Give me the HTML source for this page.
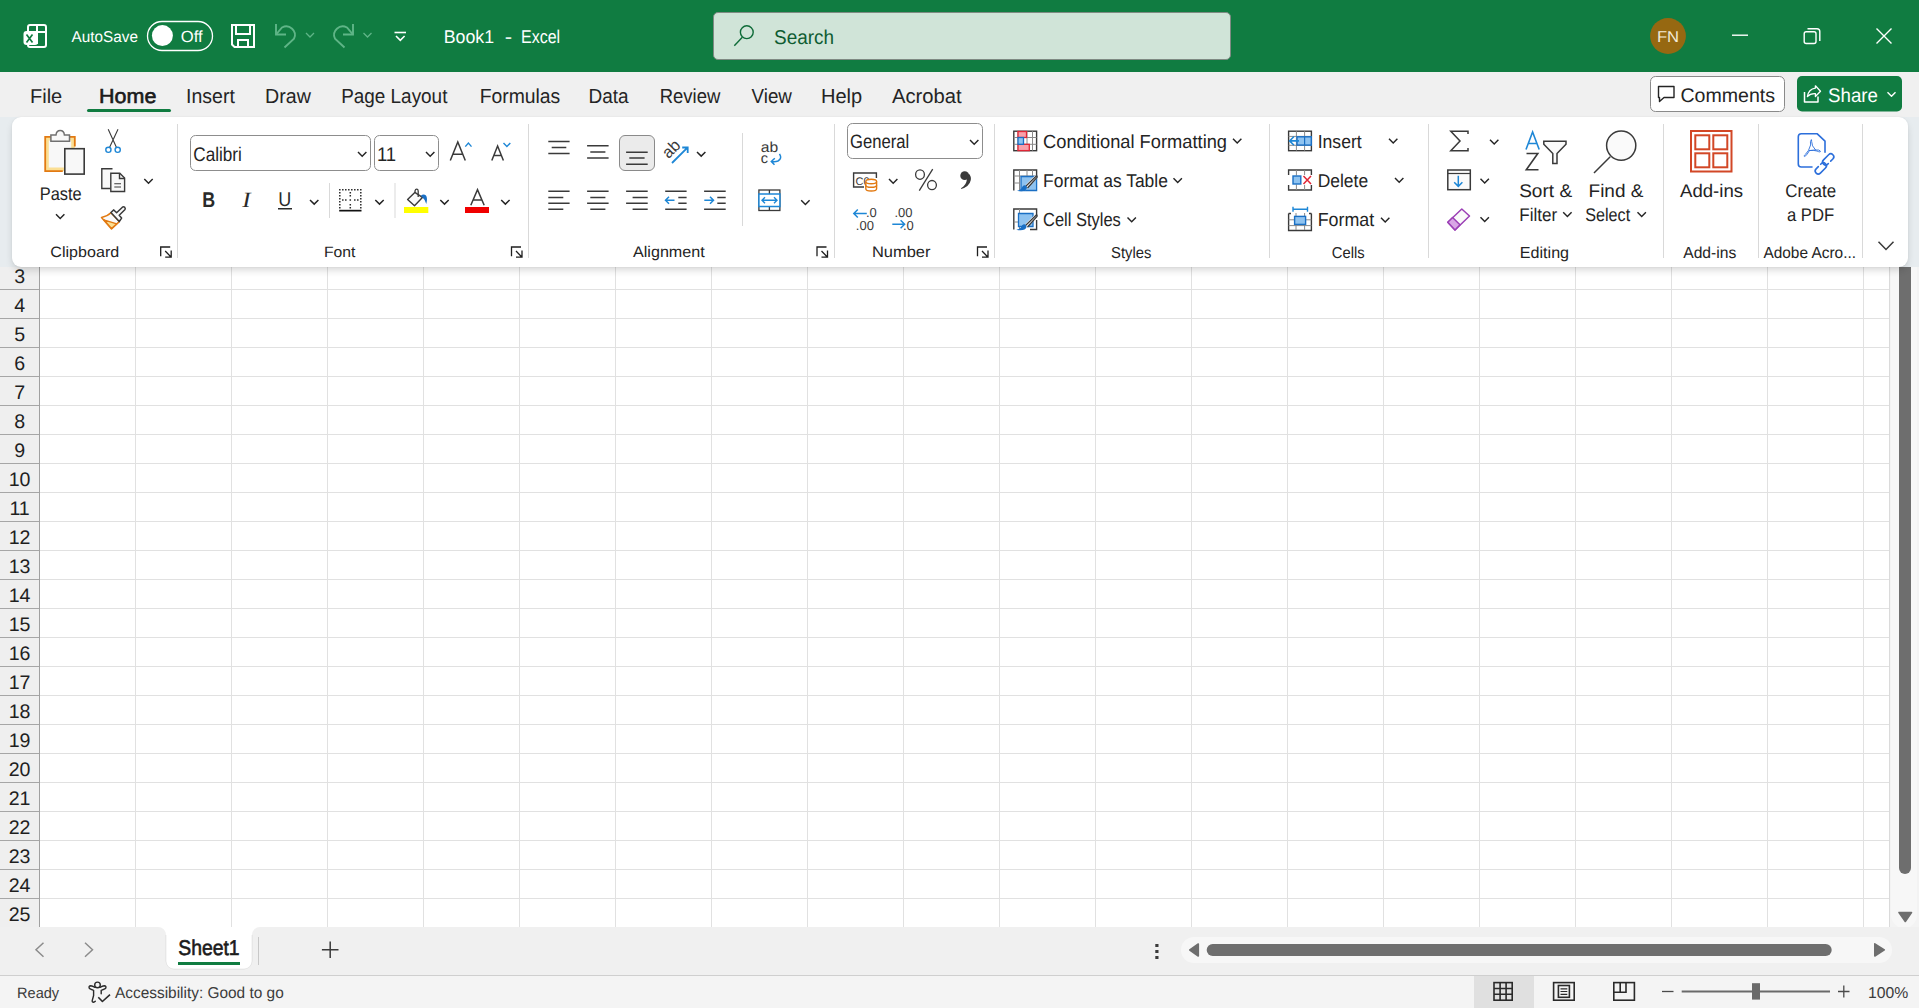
<!DOCTYPE html>
<html><head><meta charset="utf-8">
<style>
*{box-sizing:border-box;margin:0;padding:0}
html,body{width:1919px;height:1008px;overflow:hidden;background:#fff;font-family:"Liberation Sans",sans-serif;color:#242424}
.a{position:absolute}
.t{position:absolute;white-space:nowrap;line-height:1;transform-origin:0 0}
svg{position:absolute;overflow:visible}
#title{left:0;top:0;width:1919px;height:72px;background:#107c41}
#tabs{left:0;top:72px;width:1919px;height:45px;background:#f0f0f0}
#band{left:0;top:117px;width:1919px;height:150px;background:#e7ecef}
#ribbon{left:12px;top:117px;width:1896px;height:150px;background:#fff;border-radius:9px;box-shadow:0 4px 8px -2px rgba(0,0,0,.2),0 0 2px rgba(0,0,0,.06)}
#grid{left:40px;top:261px;width:1849px;height:667px;background-color:#fff;
 background-image:linear-gradient(90deg,transparent 95px,#e1e1e1 95px,#e1e1e1 96px,transparent 96px),linear-gradient(180deg,transparent 28px,#e1e1e1 28px,#e1e1e1 29px,transparent 29px);
 background-size:96px 29px,96px 29px;background-position:0 0,0 0}
#rowhdr{left:0;top:261px;width:40px;height:666px;background-color:#efefef;border-right:1px solid #a0a0a0;
 background-image:linear-gradient(180deg,transparent 28px,#a6a6a6 28px,#a6a6a6 29px,transparent 29px);background-size:40px 29px}
#vscroll{left:1889px;top:260px;width:30px;height:667px;background:#f3f3f3}
#sheetbar{left:0;top:927px;width:1919px;height:48px;background:#fff}
#status{left:0;top:975px;width:1919px;height:33px;background:#f4f4f4;border-top:1px solid #cfcfcf}
.sep{position:absolute;width:1px;background:#dadada}
text{font-family:"Liberation Sans",sans-serif;white-space:pre;text-rendering:geometricPrecision}

</style></head><body>
<div id="title" class="a"></div>
<div id="tabs" class="a"></div>
<div id="grid" class="a"></div>
<div id="rowhdr" class="a"></div>
<div id="vscroll" class="a"></div>
<div id="sheetbar" class="a"></div>
<div id="status" class="a"></div>
<!-- ===== BOTTOM ===== -->
<svg style="left:0;top:260px" width="1919" height="748" viewBox="0 260 1919 748">
 <!-- vertical scrollbar -->
 <rect x="1889" y="267" width="1" height="660" fill="#dadada"/>
 <path d="M1891 267 H1917 V915 A13 13 0 0 1 1891 915 Z" fill="#f7f7f7"/>
 <path d="M1899 267 H1911 V868 A6 6 0 0 1 1899 868 Z" fill="#6e6e6e"/>
 <path d="M1899 912.5 H1911.5 L1905.3 921.5 Z" fill="#6e6e6e" stroke="#6e6e6e" stroke-width="1.6" stroke-linejoin="round"/>
 <!-- sheet bar -->
 <path d="M0 927 H158 A8 8 0 0 1 166 935 V961 A8 8 0 0 0 174 969 H244 A8 8 0 0 0 252 961 V935 A8 8 0 0 1 260 927 H1919 V975 H0 Z" fill="#f0f0f0"/>
 <path d="M166 935 V961 A8 8 0 0 0 174 969 H244 A8 8 0 0 0 252 961 V935" fill="none" stroke="#000" stroke-opacity="0.07" stroke-width="1"/>
 <rect x="178" y="962" width="62" height="3" fill="#107c41"/>
 <rect x="258" y="937" width="1" height="28" fill="#c8c8c8"/>
 <g fill="none" stroke="#8c8c8c" stroke-width="1.5">
  <path d="M43.5 942.8 L36 949.8 L43.5 956.8"/>
  <path d="M85 942.8 L92.5 949.8 L85 956.8"/>
 </g>
 <path d="M330.2 941.5 V958 M321.9 949.8 H338.5" stroke="#3a3a3a" stroke-width="1.5"/>
 <g fill="#3a3a3a">
  <rect x="1155.3" y="944" width="3.2" height="3"/>
  <rect x="1155.3" y="950" width="3.2" height="3"/>
  <rect x="1155.3" y="956" width="3.2" height="3"/>
 </g>
 <rect x="1181" y="937" width="711" height="26" rx="13" fill="#f7f7f7"/>
 <path d="M1198.3 944 V956 L1189.8 950 Z" fill="#6e6e6e" stroke="#6e6e6e" stroke-width="1.6" stroke-linejoin="round"/>
 <rect x="1206.7" y="944" width="625" height="12" rx="6" fill="#6e6e6e"/>
 <path d="M1874.8 943.8 V956 L1884.3 949.9 Z" fill="#6e6e6e" stroke="#6e6e6e" stroke-width="1.6" stroke-linejoin="round"/>
 <!-- status bar -->
 <g fill="none" stroke="#2a2a2a" stroke-width="1.4" stroke-linecap="round" stroke-linejoin="round">
  <circle cx="97.5" cy="984.9" r="2.8"/>
  <path d="M95 987.3 Q92.5 986 90.8 985.8 Q88.5 986 89.2 988 Q89.5 989 93.6 990.3 V995.5 L92.2 1000.6 Q92 1002.2 93.5 1002.2 Q94.5 1002 95.3 1001.2"/>
  <path d="M100 987.3 Q102.5 986 104.2 985.8 Q106.5 986 105.8 988 Q105.5 989 101.2 990.3 V993.8"/>
  <path d="M98.3 997.2 L102.4 1001.5 L110 994.6" stroke-linecap="butt" stroke-width="1.6"/>
 </g>
 <rect x="1474" y="976" width="60" height="32" fill="#e0e0e0"/>
 <g fill="none" stroke="#2a2a2a" stroke-width="1.6">
  <rect x="1494" y="982.6" width="18.2" height="17.6"/>
  <path d="M1500.1 982.6 V1000.2 M1506.1 982.6 V1000.2 M1494 988.5 H1512.2 M1494 994.3 H1512.2"/>
  <rect x="1553.6" y="982.6" width="20.6" height="17.6" stroke-width="1.6"/>
  <rect x="1558.4" y="985.5" width="11" height="11.8" stroke-width="1.6"/>
  <path d="M1560.5 988.8 H1567.3 M1560.5 991.5 H1567.3 M1560.5 994.3 H1567.3" stroke-width="1.2"/>
  <rect x="1613.8" y="982.6" width="20.6" height="17.6" stroke-width="1.6"/>
  <path d="M1614 992.3 H1626 V982.6 M1620.2 982.6 V992.3" stroke-width="1.6"/>
 </g>
 <g stroke="#4a4a4a" stroke-width="1.3">
  <path d="M1662 991.5 H1673.5"/>
  <path d="M1838 991.5 H1849.5 M1843.8 985.6 V997.6"/>
 </g>
 <rect x="1681.7" y="990.5" width="148.3" height="2" fill="#6a6a6a"/>
 <rect x="1752" y="983.2" width="8" height="16.4" fill="#6a6a6a"/>
</svg>

<div id="band" class="a"></div>
<div id="ribbon" class="a"></div>

<!-- ===== TITLE BAR ===== -->
<svg style="left:0;top:0" width="1919" height="72" viewBox="0 0 1919 72">
 <!-- excel icon -->
 <g fill="none" stroke="#fff" stroke-width="2">
  <path d="M28 31 V27 Q28 25 30 25 H44 Q46 25 46 27 V45 Q46 47 44 47 H30 Q28 47 28 45"/>
  <path d="M37 25 V32 M28 32 H46 M37 32 V44"/>
 </g>
 <rect x="23.5" y="31" width="14.5" height="14" rx="3" fill="#fff"/>
 <path d="M26.5 34.5 L32.5 42.5 M32.5 34.5 L26.5 42.5" stroke="#107c41" stroke-width="1.7"/>
 <!-- toggle -->
 <rect x="147.5" y="21.5" width="65" height="29" rx="14.5" fill="none" stroke="#fff" stroke-width="1.3"/>
 <circle cx="162.4" cy="35.6" r="10.5" fill="#fff"/>
 <!-- save -->
 <g fill="none" stroke="#fff" stroke-width="2">
  <path d="M232 25 H254 V47 H234.5 L232 44.5 Z"/>
  <path d="M236 25 V34 H250 V25"/>
  <path d="M238 47 V40 H248 V47"/>
 </g>
 <!-- undo / redo -->
 <g fill="none" stroke="#5fb587" stroke-width="1.9">
  <path d="M276 24 V34.5 H286"/>
  <path d="M276.5 34 L282 27.5 A8.6 8.6 0 0 1 294 38.7 L284.5 47.5"/>
  <path d="M306 33 L310 37 L314 33" stroke-width="1.3"/>
  <path d="M353 24 V34.5 H343"/>
  <path d="M352.5 34 L347 27.5 A8.6 8.6 0 0 0 335 38.7 L344.5 47.5"/>
  <path d="M363.5 33 L367.5 37 L371.5 33" stroke-width="1.3"/>
 </g>
 <!-- qat customize -->
 <g fill="none" stroke="#fff" stroke-width="1.6">
  <path d="M394.5 32.5 H406"/>
  <path d="M396 36 L400.3 40.3 L404.6 36"/>
 </g>
 <!-- search box -->
 <rect x="713.5" y="12.5" width="517" height="47" rx="4.5" fill="#d0e4d8" stroke="#7f8a83" stroke-width="1"/>
 <g fill="none" stroke="#0e6b38" stroke-width="1.4">
  <circle cx="746.8" cy="32.2" r="6.4"/>
  <path d="M742.3 37.2 L734.3 45.8"/>
 </g>
 <!-- avatar -->
 <circle cx="1668" cy="36" r="17.9" fill="#966811"/>
 <!-- window controls -->
 <g fill="none" stroke="#fff" stroke-width="1.4">
  <path d="M1732 35.2 H1748"/>
  <rect x="1804.2" y="31.7" width="11.8" height="11.8" rx="2"/>
  <path d="M1807.5 28.7 H1817 Q1819.8 28.7 1819.8 31.5 V41"/>
  <path d="M1876.5 28.5 L1891.5 43.5 M1891.5 28.5 L1876.5 43.5"/>
 </g>
</svg>

<!-- ===== TABS ===== -->
<svg style="left:0;top:72px" width="1919" height="45" viewBox="0 72 1919 45">
 <rect x="87" y="109" width="84" height="3" rx="1.5" fill="#107c41"/>
 <rect x="1650.5" y="76.5" width="134" height="35" rx="5" fill="#fff" stroke="#8a8a8a" stroke-width="1"/>
 <g fill="none" stroke="#242424" stroke-width="1.4">
  <path d="M1658.5 86.5 H1674 V97.5 H1664 L1659.5 101.5 V97.5 H1658.5 Z" stroke-linejoin="round"/>
 </g>
 <rect x="1797" y="76" width="105" height="35.5" rx="5" fill="#107c41"/>
 <g fill="none" stroke="#fff" stroke-width="1.5" stroke-linejoin="round">
  <path d="M1804.5 92 V102 H1818 V96.6" stroke-width="1.5"/>
  <path d="M1807.4 96.6 Q1808.5 89 1815.4 88.1 V85.8 L1820.5 91.3 L1815.4 96.5 V93.6 Q1810.5 93.2 1807.4 96.6 Z" stroke-width="1.3"/>
  <path d="M1887.5 92.3 L1891.5 96.3 L1895.5 92.3" stroke-width="1.4"/>
 </g>
</svg>

<!-- ===== RIBBON ICONS ===== -->
<svg style="left:0;top:117px" width="1919" height="150" viewBox="0 117 1919 150">
 <defs>
  <path id="chev" d="M0 0 L4.2 4.2 L8.4 0" fill="none" stroke="#242424" stroke-width="1.45"/>
 </defs>
 <!-- Clipboard: paste -->
 <rect x="45.2" y="136.8" width="29.6" height="34.3" fill="#fbdf94"/>
 <rect x="48.8" y="140.5" width="22.4" height="27" fill="#f8f8f8"/>
 <path d="M62.8 171.1 H45.2 V136.8 H74.8 V146.6" fill="none" stroke="#e27a12" stroke-width="1.8"/>
 <path d="M50.9 141.2 V135 H56 Q56.5 130.6 60.2 130.6 Q63.9 130.6 64.4 135 H69.5 V141.2 Z" fill="#f8f8f8" stroke="#707070" stroke-width="1.5" stroke-linejoin="miter"/>
 <rect x="64.8" y="148.7" width="19.4" height="25.4" fill="#f8f8f8" stroke="#3a3a3a" stroke-width="1.6"/>
 <use href="#chev" x="56" y="214.2"/>
 <!-- cut -->
 <g fill="none" stroke-width="1.4">
  <path d="M108.2 129.2 L116.5 147.5 M118 129.2 L109.5 147.5" stroke="#3a3a3a" stroke-width="1.1"/>
  <circle cx="108.4" cy="149.8" r="2.6" stroke="#1e87d6"/>
  <circle cx="117.7" cy="149.8" r="2.6" stroke="#1e87d6"/>
 </g>
 <!-- copy -->
 <g fill="#f8f8f8" stroke="#3a3a3a" stroke-width="1.4" stroke-linejoin="miter">
  <path d="M112.5 168.8 H101.8 V188.5 H110.5"/>
  <path d="M110.8 173.3 H119.8 L124.6 178 V191.5 H110.8 Z"/>
  <path d="M119.5 173.3 V178.5 H124.6" fill="none"/>
  <path d="M114.3 183.8 H121 M114.3 187 H121" fill="none" stroke-width="1.1"/>
 </g>
 <use href="#chev" x="144.3" y="179.0"/>
 <!-- format painter -->
 <path d="M110.9 212.8 Q107.5 216.3 101.5 217.4 L111.5 228.9 L119.3 221.6 Z" fill="#fafafa" stroke="#e27a12" stroke-width="1.5" stroke-linejoin="round"/>
 <path d="M103.8 219.8 L116.8 223.8 L111.5 228.4 Z" fill="#fbdf94" stroke="#e27a12" stroke-width="1.3" stroke-linejoin="round"/>
 <path d="M110.9 212.5 L113.8 209.9 L116.6 212.8 L122.4 207.2 Q123.6 206.2 124.8 207.4 Q125.8 208.6 124.8 209.8 L119.2 215.3 L121.6 218 L119.3 221.6 Z" fill="#fafafa" stroke="#3a3a3a" stroke-width="1.5" stroke-linejoin="round"/>
 <!-- ===== FONT GROUP ===== -->
 <rect x="190.5" y="135.5" width="180" height="35" rx="5" fill="#fff" stroke="#8d8d8d" stroke-width="1"/>
 <rect x="374.5" y="135.5" width="64" height="35" rx="5" fill="#fff" stroke="#8d8d8d" stroke-width="1"/>
 <use href="#chev" x="358" y="152.0"/>
 <use href="#chev" x="426" y="152.0"/>
 <g fill="none" stroke="#3a3a3a" stroke-width="1.5">
  <path d="M450.3 160.5 L457.8 142 L465.3 160.5 M452.8 154.3 H462.8"/>
  <path d="M491.8 160.5 L497.6 146 L503.4 160.5 M493.8 155.5 H501.4"/>
 </g>
 <g fill="none" stroke="#1e87d6" stroke-width="1.4">
  <path d="M465.3 146.6 L468.4 143 L471.5 146.6"/>
  <path d="M503.5 143 L506.9 146.6 L510.3 143"/>
 </g>
 <text x="0" y="0" transform="translate(202.3 206.8) scale(0.84 1)" font-weight="700" font-size="21.3" fill="#2a2a2a">B</text>
 <text x="0" y="0" transform="translate(242.3 206.8) scale(1.15 1)" style="font-family:'Liberation Serif',serif;font-style:italic" font-size="21.8" fill="#2a2a2a">I</text>
 <text x="0" y="0" transform="translate(278.2 206.3) scale(0.9 1)" font-size="20" fill="#2a2a2a">U</text>
 <rect x="278" y="208" width="14" height="1.5" fill="#2a2a2a"/>
 <use href="#chev" x="310" y="199.9"/>
 <path d="M339.05 189.05h1.5v1.5h-1.5zM342.05 189.05h1.5v1.5h-1.5zM345.05 189.05h1.5v1.5h-1.5zM348.05 189.05h1.5v1.5h-1.5zM351.05 189.05h1.5v1.5h-1.5zM354.05 189.05h1.5v1.5h-1.5zM357.05 189.05h1.5v1.5h-1.5zM360.05 189.05h1.5v1.5h-1.5zM339.05 192.05h1.5v1.5h-1.5zM360.05 192.05h1.5v1.5h-1.5zM339.05 195.05h1.5v1.5h-1.5zM360.05 195.05h1.5v1.5h-1.5zM339.05 198.05h1.5v1.5h-1.5zM360.05 198.05h1.5v1.5h-1.5zM339.05 201.05h1.5v1.5h-1.5zM360.05 201.05h1.5v1.5h-1.5zM339.05 204.05h1.5v1.5h-1.5zM360.05 204.05h1.5v1.5h-1.5zM339.05 207.05h1.5v1.5h-1.5zM360.05 207.05h1.5v1.5h-1.5zM349.55 199.35h1.5v1.5h-1.5zM349.55 192.05h1.5v1.5h-1.5zM349.55 195.05h1.5v1.5h-1.5zM349.55 204.05h1.5v1.5h-1.5zM349.55 207.05h1.5v1.5h-1.5zM342.05 199.35h1.5v1.5h-1.5zM345.05 199.35h1.5v1.5h-1.5zM354.05 199.35h1.5v1.5h-1.5zM357.05 199.35h1.5v1.5h-1.5z" fill="#2a2a2a"/>
 <rect x="339.2" y="209.8" width="22.3" height="1.7" fill="#111"/>
 <use href="#chev" x="375.3" y="199.9"/>
 <path d="M407.6 199.5 L414.8 192.4 L422.4 197.4 L414.5 205.8 Z" fill="#fafafa" stroke="#3a3a3a" stroke-width="1.4" stroke-linejoin="round"/>
 <path d="M415 192.5 V190.8 Q415.5 189 417 189.2 Q418.3 189.5 418.2 191.2 V197" fill="none" stroke="#3a3a3a" stroke-width="1.3"/>
 <path d="M420.8 195.8 Q423.5 193.2 426 195.5 Q427.8 198 426.3 204 Q425 199.5 422.5 197.6 Z" fill="#1a6fc4"/>
 <rect x="404" y="207" width="24.3" height="6" fill="#ffff00"/>
 <use href="#chev" x="440.3" y="199.9"/>
 <path d="M470.8 205.3 L477.5 189.6 L484.2 205.3 M473.3 200 H481.7" fill="none" stroke="#3a3a3a" stroke-width="1.5"/>
 <rect x="465" y="207" width="24" height="6" fill="#f00000"/>
 <use href="#chev" x="501.2" y="199.9"/>
 <!-- ===== ALIGNMENT GROUP ===== -->
 <rect x="619.5" y="135.5" width="35" height="35" rx="5.5" fill="#ebebeb" stroke="#8a8a8a" stroke-width="1"/>
 <g fill="none" stroke="#3a3a3a" stroke-width="1.5">
  <path d="M548.3 141.4 H569.6 M551.7 147.5 H566.3 M548.3 153.6 H569.6"/>
  <path d="M587.1 145.8 H608.6 M590.3 151.9 H605.4 M587.1 158 H608.6"/>
  <path d="M626.1 152.2 H647.7 M629.3 158 H644.6 M626.1 164.3 H647.7"/>
  <path d="M548.3 191.3 H569.6 M548.3 197.4 H563.3 M548.3 203.2 H569.6 M548.3 209.2 H563.3"/>
  <path d="M587.1 191.3 H608.6 M590.3 197.4 H605.4 M587.1 203.2 H608.6 M590.3 209.2 H605.4"/>
  <path d="M626.1 191.3 H647.7 M632.6 197.4 H647.7 M626.1 203.2 H647.7 M632.6 209.2 H647.7"/>
  <path d="M665.2 191.3 H686.6 M678.3 197.4 H686.6 M678.3 203.2 H686.6 M665.2 209.2 H686.6"/>
  <path d="M704.1 191.3 H725.7 M717.3 197.4 H725.7 M717.3 203.2 H725.7 M704.1 209.2 H725.7"/>
 </g>
 <g fill="none" stroke="#1e87d6" stroke-width="1.5">
  <path d="M665.5 200.3 H674.5 M669 196.8 L665.5 200.3 L669 203.8"/>
  <path d="M704.3 200.3 H713.5 M710 196.8 L713.5 200.3 L710 203.8"/>
  <path d="M672 163 L687.2 147.8 M682.2 147.5 H687.7 V153" stroke-width="1.8"/>
 </g>
 <text x="0" y="0" font-family="Liberation Sans" font-size="16.5" fill="#3a3a3a" transform="translate(668.6 159.2) rotate(-45)">ab</text>
 <use href="#chev" x="697" y="151.9"/>
 <text x="760.8" y="151.8" font-family="Liberation Sans" font-size="14.5" fill="#3a3a3a" transform="translate(760.8 0) scale(1.08 1) translate(-760.8 0)">ab</text>
 <text x="760.8" y="163.2" font-family="Liberation Sans" font-size="14.5" fill="#3a3a3a">c</text>
 <path d="M779.5 153.8 Q782.5 158.5 778 161 Q775.5 162 771.5 161.5 M774.8 158.3 L771.3 161.5 L774.5 164.8" fill="none" stroke="#1e87d6" stroke-width="1.5"/>
 <rect x="758.9" y="190" width="21" height="20.5" fill="#fff" stroke="#3a3a3a" stroke-width="1.3"/>
 <path d="M769.4 190 V194 M769.4 206.5 V210.5" stroke="#3a3a3a" stroke-width="1.3"/>
 <rect x="758.9" y="194" width="21" height="12.5" fill="#fff" stroke="#1e87d6" stroke-width="1.5"/>
 <path d="M762 200.3 H777 M765 197.3 L762 200.3 L765 203.3 M774 197.3 L777 200.3 L774 203.3" fill="none" stroke="#1e87d6" stroke-width="1.4"/>
 <use href="#chev" x="801.2" y="200.2"/>
 <!-- ===== NUMBER GROUP ===== -->
 <rect x="847.5" y="123.5" width="135" height="35" rx="5" fill="#fff" stroke="#8d8d8d" stroke-width="1"/>
 <use href="#chev" x="970" y="140.0"/>
 <path d="M864 187 H853.6 V173 H876.4 V178" fill="none" stroke="#3a3a3a" stroke-width="1.4"/>
 <text x="855.5" y="185" font-family="Liberation Sans" font-size="11" fill="#3a3a3a">C0</text>
 <g fill="#fff" stroke="#e27a12" stroke-width="1.4">
  <path d="M865.8 181.5 V188.8 Q865.8 191 871.2 191 Q876.6 191 876.6 188.8 V181.5"/>
  <ellipse cx="871.2" cy="181.5" rx="5.4" ry="2.2"/>
  <path d="M865.8 185.2 Q865.8 187.3 871.2 187.3 Q876.6 187.3 876.6 185.2" fill="none"/>
 </g>
 <use href="#chev" x="889" y="179.0"/>
 <g fill="none" stroke="#3a3a3a" stroke-width="1.3">
  <ellipse cx="920" cy="174.6" rx="4.4" ry="4.7"/>
  <ellipse cx="932" cy="185.1" rx="4.4" ry="4.6"/>
  <path d="M919.3 190.6 L932.7 169.1"/>
 </g>
 <circle cx="964.7" cy="175.7" r="4.4" fill="#3a3a3a"/>
 <path d="M968.5 173.5 Q971.5 176 970.8 180 Q969.5 186.5 961.2 189 L961 188.2 Q966.5 185 966.8 179.8 Z" fill="#3a3a3a"/>
 <text x="866" y="217.3" font-family="Liberation Sans" font-size="13" fill="#3a3a3a">.0</text>
 <text x="855.8" y="229.5" font-family="Liberation Sans" font-size="13" fill="#3a3a3a">.00</text>
 <path d="M866.8 213.5 H853.8 M857.8 209.5 L853.8 213.5 L857.8 217.5" fill="none" stroke="#1e87d6" stroke-width="1.5"/>
 <text x="894.5" y="217.3" font-family="Liberation Sans" font-size="13" fill="#3a3a3a">.00</text>
 <text x="903" y="229.5" font-family="Liberation Sans" font-size="13" fill="#3a3a3a">.0</text>
 <path d="M892.3 224.2 H904.6 M900.6 220.2 L904.6 224.2 L900.6 228.2" fill="none" stroke="#1e87d6" stroke-width="1.5"/>
 <!-- ===== STYLES GROUP ===== -->
 <g>
  <rect x="1013.8" y="131.2" width="22.8" height="19.5" fill="#fff" stroke="#3a3a3a" stroke-width="1.4"/>
  <path d="M1018 131.2 V150.7 M1027 131.2 V150.7 M1032.5 131.2 V150.7 M1013.8 137.5 H1036.6 M1013.8 144.3 H1036.6" stroke="#8a8a8a" stroke-width="1"/>
  <rect x="1018" y="131.5" width="8.5" height="6" fill="#f9a0aa" stroke="#e02636" stroke-width="1.3"/>
  <rect x="1018" y="144.3" width="11.3" height="6.3" fill="#f9a0aa" stroke="#e02636" stroke-width="1.3"/>
  <rect x="1018" y="137.5" width="5.5" height="6.8" fill="#8fc3f0" stroke="#1a6fc4" stroke-width="1.3"/>
 </g>
 <use href="#chev" x="1233" y="138.7"/>
 <g>
  <path d="M1013.8 190.5 V170 H1036.6 V176" fill="none" stroke="#3a3a3a" stroke-width="1.4"/>
  <path d="M1013.8 176 H1036.6 M1013.8 183 H1020 M1019.5 170 V190.5 M1027 170 V176 M1032.5 170 V176" stroke="#8a8a8a" stroke-width="1"/>
  <path d="M1021 176.5 H1036.6 V190.5 H1021 Z" fill="#8fc3f0" stroke="#1a6fc4" stroke-width="1.3"/>
  <path d="M1024 189 L1036.5 176.5" stroke="#fff" stroke-width="3.5"/>
  <path d="M1025.5 186.5 L1036 176.2 Q1037.5 175.5 1037 177.5 L1027.5 188" fill="#fff" stroke="#3a3a3a" stroke-width="1.3"/>
  <path d="M1017 190.7 Q1021 190.5 1022.5 186.5 Q1024.5 184.5 1026.5 186 Q1028 188.5 1025 190.5 Q1022 192 1017 190.7" fill="#1a6fc4"/>
 </g>
 <use href="#chev" x="1173.5" y="178.2"/>
 <g>
  <path d="M1013.8 229.5 V209 H1036.6 V215" fill="none" stroke="#3a3a3a" stroke-width="1.4"/>
  <path d="M1019.5 209 V229.5 M1013.8 222 H1019" stroke="#8a8a8a" stroke-width="1"/>
  <path d="M1018.5 213.5 H1033 V226.5 H1018.5 Z" fill="#8fc3f0" stroke="#1a6fc4" stroke-width="1.3"/>
  <path d="M1036.6 220 V229.5 H1030" fill="none" stroke="#3a3a3a" stroke-width="1.4"/>
  <path d="M1024 228 L1036.5 215.5" stroke="#fff" stroke-width="3.5"/>
  <path d="M1025.5 225.5 L1036 215.2 Q1037.5 214.5 1037 216.5 L1027.5 227" fill="#fff" stroke="#3a3a3a" stroke-width="1.3"/>
  <path d="M1016 229.7 Q1020.5 229.5 1022 225.5 Q1024 223.5 1026 225 Q1027.5 227.5 1024.5 229.5 Q1021.5 231 1016 229.7" fill="#1a6fc4"/>
 </g>
 <use href="#chev" x="1127.5" y="217.5"/>
 <!-- ===== CELLS GROUP ===== -->
 <g>
  <rect x="1288.6" y="131.2" width="22.8" height="19.5" fill="#fff" stroke="#3a3a3a" stroke-width="1.4"/>
  <path d="M1296.4 131.2 V150.7 M1304.6 131.2 V150.7 M1288.6 136.4 H1311.4 M1288.6 145.3 H1311.4" stroke="#8a8a8a" stroke-width="1"/>
  <rect x="1297" y="136.8" width="14.3" height="8.3" fill="#8fc3f0" stroke="#1a6fc4" stroke-width="1.4"/>
  <path d="M1304.6 136.8 V145.1" stroke="#1a6fc4" stroke-width="1.2"/>
  <path d="M1290 140.9 H1299 M1294 136.5 L1289.6 140.9 L1294 145.3" fill="none" stroke="#1e87d6" stroke-width="1.6"/>
 </g>
 <g>
  <path d="M1288.6 175 V170 H1311.4 V175 M1288.6 185 V190 H1311.4 V185" fill="none" stroke="#3a3a3a" stroke-width="1.4"/>
  <path d="M1296.4 170 V175.5 M1304.6 170 V175 M1296.4 184.5 V190 M1304.6 185 V190" stroke="#8a8a8a" stroke-width="1"/>
  <rect x="1293" y="176" width="7.8" height="8" fill="#8fc3f0" stroke="#1a6fc4" stroke-width="1.4"/>
  <path d="M1303.5 176 L1311 184 M1311 176 L1303.5 184" stroke="#e02636" stroke-width="1.5"/>
 </g>
 <g>
  <path d="M1288.6 213.5 V230.5 H1311.4 V213.5" fill="none" stroke="#3a3a3a" stroke-width="1.4"/>
  <path d="M1288.6 213.5 H1291 M1311.4 213.5 H1309" stroke="#3a3a3a" stroke-width="1.4"/>
  <path d="M1296 213 V230 M1304.6 213 V230 M1288.6 219.8 H1311.4 M1288.6 225.6 H1311.4" stroke="#8a8a8a" stroke-width="1"/>
  <rect x="1294.6" y="216.4" width="11" height="8" fill="#8fc3f0" stroke="#1a6fc4" stroke-width="1.4"/>
  <path d="M1293 209.3 H1307.5 M1293 206.8 V211.8 M1307.5 206.8 V211.8" fill="none" stroke="#1e87d6" stroke-width="1.4"/>
 </g>
 <use href="#chev" x="1389" y="138.7"/>
 <use href="#chev" x="1395" y="178.0"/>
 <use href="#chev" x="1381" y="217.7"/>
 <!-- ===== EDITING GROUP ===== -->
 <path d="M1468 134 V131.3 H1450.8 L1460 141 L1450.8 150.7 H1468 V148" fill="none" stroke="#3a3a3a" stroke-width="1.5"/>
 <use href="#chev" x="1490" y="139.7"/>
 <rect x="1447.8" y="170" width="22.5" height="19.7" fill="#fafafa" stroke="#3a3a3a" stroke-width="1.5"/>
 <path d="M1447.8 173.5 H1470.3" stroke="#3a3a3a" stroke-width="1.2"/>
 <path d="M1458.3 175.8 V186.3 M1454.2 182.3 L1458.3 186.4 L1462.4 182.3" fill="none" stroke="#1e87d6" stroke-width="1.5"/>
 <use href="#chev" x="1480.5" y="178.7"/>
 <path d="M1461.8 209 L1469.5 216 L1455 230 L1447.8 222.2 Z" fill="#fafafa" stroke="#9b3fb5" stroke-width="1.5" stroke-linejoin="round"/>
 <path d="M1447.8 222.2 L1452.6 217.5 L1460 224.8 L1455 230 Z" fill="#d9a6e6" stroke="#9b3fb5" stroke-width="1.5" stroke-linejoin="round"/>
 <use href="#chev" x="1480.5" y="217.2"/>
 <!-- sort & filter -->
 <path d="M1526 149.5 L1532.6 132 L1539.2 149.5 M1528.3 143.5 H1537" fill="none" stroke="#1e87d6" stroke-width="1.6"/>
 <path d="M1526.5 153.5 H1537.8 L1526.3 169.7 H1538.5" fill="none" stroke="#3a3a3a" stroke-width="1.6"/>
 <path d="M1543.8 141.3 H1566 V144.3 L1557 153.5 V163.5 H1552.8 V153.5 L1543.8 144.3 Z" fill="#fafafa" stroke="#3a3a3a" stroke-width="1.5" stroke-linejoin="miter"/>
 <use href="#chev" x="1563.2" y="212.2"/>
 <!-- find & select -->
 <circle cx="1621.2" cy="145.6" r="14.6" fill="#fafafa" stroke="#3a3a3a" stroke-width="1.5"/>
 <path d="M1610.2 156.8 L1594 173" stroke="#3a3a3a" stroke-width="1.5"/>
 <use href="#chev" x="1637.5" y="212.2"/>
 <!-- add-ins -->
 <g fill="none" stroke="#d24726" stroke-width="2">
  <rect x="1691" y="131" width="40.5" height="40.5"/>
  <rect x="1695.3" y="135.3" width="14" height="14"/>
  <rect x="1713.3" y="135.3" width="14" height="14"/>
  <rect x="1695.3" y="153.3" width="14" height="14"/>
  <rect x="1713.3" y="153.3" width="14" height="14"/>
 </g>
 <!-- create pdf -->
 <g fill="none" stroke="#2c6fdb" stroke-linejoin="round" stroke-linecap="round">
  <path d="M1812 167 H1801.3 Q1798.3 167 1798.3 164 V136.8 Q1798.3 133.8 1801.3 133.8 H1817.3 L1825 141.2 V152.3" stroke-width="1.6"/>
  <path d="M1811.2 139.8 Q1809.8 141 1810.6 145 Q1809 151 1805.5 154.3 Q1803 156.5 1804.8 156.4 Q1806.5 156 1809.5 150.5 Q1813.5 150 1817 151 Q1820.8 152.8 1820.3 151 Q1819.5 149.6 1815.6 150 Q1811.5 146 1811.6 141.3 Q1811.9 139.5 1811.2 139.8 M1809.3 150.6 L1815.6 150" stroke-width="0.9"/>
  <path d="M0.5 3 H3.6 A3 3 0 0 0 3.6 -3 H-3.6 A3 3 0 0 0 -3.6 3 H-2.8" transform="translate(1828.2 159.4) rotate(-45)" stroke-width="1.6"/>
  <path d="M-0.5 -3 H-3.6 A3 3 0 0 0 -3.6 3 H3.6 A3 3 0 0 0 3.6 -3 H2.8" transform="translate(1820.8 168.4) rotate(-45)" stroke-width="1.6"/>
 </g>
 <!-- collapse ribbon -->
 <path d="M1878.5 241.8 L1886 249.5 L1893.5 241.8" fill="none" stroke="#3a3a3a" stroke-width="1.5"/>
 <!-- launchers & separators -->
 <g fill="none" stroke="#1f1f1f" stroke-width="1.3">
  <path d="M160.7 256.2 V247 H170.2 M165.2 251 L171.2 257.2 M171.2 250.5 V257.2 H165.2"/>
  <path d="M511.5 256.2 V247 H521.0 M516.0 251 L522.0 257.2 M522.0 250.5 V257.2 H516.0"/>
  <path d="M817.0 256.2 V247 H826.5 M821.5 251 L827.5 257.2 M827.5 250.5 V257.2 H821.5"/>
  <path d="M977.5 256.2 V247 H987.0 M982.0 251 L988.0 257.2 M988.0 250.5 V257.2 H982.0"/>
 </g>
 <g fill="#d9d9d9">
  <rect x="177" y="124" width="1" height="134"/>
  <rect x="528" y="124" width="1" height="134"/>
  <rect x="834" y="124" width="1" height="134"/>
  <rect x="994" y="124" width="1" height="134"/>
  <rect x="1269" y="124" width="1" height="134"/>
  <rect x="1428" y="124" width="1" height="134"/>
  <rect x="1663" y="124" width="1" height="134"/>
  <rect x="1758" y="124" width="1" height="134"/>
  <rect x="1862" y="124" width="1" height="134"/>
  <rect x="329" y="183" width="1" height="35"/>
  <rect x="394.5" y="183" width="1" height="35"/>
  <rect x="742" y="133" width="1" height="93"/>
 </g>
</svg>

<svg id="txt" style="position:absolute;left:0;top:0;overflow:visible" width="1919" height="1008" viewBox="0 0 1919 1008">
<text id="t_autosave" x="0" y="0" transform="translate(71.59 41.90) scale(0.9806 1)" font-size="15.61" fill="#fff">AutoSave</text>
<text id="t_off" x="0" y="0" transform="translate(180.78 41.90) scale(1.0286 1)" font-size="16.18" fill="#fff">Off</text>
<text id="t_book" x="0" y="0" transform="translate(443.64 43.10) scale(0.9640 1)" font-size="18.47" fill="#fff">Book1</text>
<text id="t_dash" x="0" y="0" transform="translate(504.80 43.10) scale(1.2000 1)" font-size="18.47" fill="#fff">-</text>
<text id="t_excel" x="0" y="0" transform="translate(521.02 43.10) scale(0.8651 1)" font-size="18.47" fill="#fff">Excel</text>
<text id="t_search" x="0" y="0" transform="translate(774.05 44.00) scale(0.9459 1)" font-size="20.02" fill="#0e5c32">Search</text>
<text id="t_fn" x="0" y="0" transform="translate(1656.92 41.50) scale(1.0556 1)" font-size="15.75" fill="#f3ead8">FN</text>
<text id="t_file" x="0" y="0" transform="translate(30.00 102.70) scale(1.0000 1)" font-size="20.02" fill="#242424">File</text>
<text id="t_home" x="0" y="0" transform="translate(99.12 102.90) scale(1.0577 1)" font-size="20.30" fill="#1b1b1b" stroke="#1b1b1b" stroke-width="0.6">Home</text>
<text id="t_insert" x="0" y="0" transform="translate(186.06 102.90) scale(0.9612 1)" font-size="20.30" fill="#242424">Insert</text>
<text id="t_draw" x="0" y="0" transform="translate(265.06 102.90) scale(0.9689 1)" font-size="20.30" fill="#242424">Draw</text>
<text id="t_pl" x="0" y="0" transform="translate(341.13 102.90) scale(0.9330 1)" font-size="20.30" fill="#242424">Page Layout</text>
<text id="t_form" x="0" y="0" transform="translate(479.65 102.90) scale(0.9542 1)" font-size="20.30" fill="#242424">Formulas</text>
<text id="t_data" x="0" y="0" transform="translate(588.48 102.90) scale(0.9357 1)" font-size="20.30" fill="#242424">Data</text>
<text id="t_review" x="0" y="0" transform="translate(659.71 102.90) scale(0.9108 1)" font-size="20.30" fill="#242424">Review</text>
<text id="t_view" x="0" y="0" transform="translate(751.58 102.90) scale(0.9250 1)" font-size="20.30" fill="#242424">View</text>
<text id="t_help" x="0" y="0" transform="translate(821.02 102.90) scale(0.9875 1)" font-size="20.30" fill="#242424">Help</text>
<text id="t_acro" x="0" y="0" transform="translate(892.00 102.90) scale(0.9971 1)" font-size="20.30" fill="#242424">Acrobat</text>
<text id="t_comments" x="0" y="0" transform="translate(1680.41 102.30) scale(0.9926 1)" font-size="19.74" fill="#242424">Comments</text>
<text id="t_share" x="0" y="0" transform="translate(1828.05 102.30) scale(0.9471 1)" font-size="19.74" fill="#fff">Share</text>
<text id="t_paste" x="0" y="0" transform="translate(39.73 199.50) scale(0.8933 1)" font-size="18.33" fill="#242424">Paste</text>
<text id="t_clip" x="0" y="0" transform="translate(50.34 256.90) scale(1.0714 1)" font-size="15.03" fill="#242424">Clipboard</text>
<text id="t_calibri" x="0" y="0" transform="translate(193.25 160.60) scale(0.8691 1)" font-size="19.74" fill="#242424">Calibri</text>
<text id="t_11" x="0" y="0" transform="translate(376.90 160.60) scale(0.9389 1)" font-size="19.74" fill="#242424">11</text>
<text id="t_font" x="0" y="0" transform="translate(323.93 256.90) scale(1.0483 1)" font-size="15.03" fill="#242424">Font</text>
<text id="t_align" x="0" y="0" transform="translate(633.00 256.90) scale(1.0435 1)" font-size="15.46" fill="#242424">Alignment</text>
<text id="t_general" x="0" y="0" transform="translate(850.07 148.00) scale(0.8582 1)" font-size="19.39" fill="#242424">General</text>
<text id="t_number" x="0" y="0" transform="translate(871.94 256.90) scale(1.0648 1)" font-size="15.46" fill="#242424">Number</text>
<text id="t_cf" x="0" y="0" transform="translate(1043.02 148.00) scale(0.9691 1)" font-size="18.89" fill="#242424">Conditional Formatting</text>
<text id="t_fat" x="0" y="0" transform="translate(1043.05 186.90) scale(0.9462 1)" font-size="18.47" fill="#242424">Format as Table</text>
<text id="t_cs" x="0" y="0" transform="translate(1043.06 226.10) scale(0.8716 1)" font-size="18.89" fill="#242424">Cell Styles</text>
<text id="t_styles" x="0" y="0" transform="translate(1111.03 257.70) scale(0.9310 1)" font-size="15.89" fill="#242424">Styles</text>
<text id="t_cins" x="0" y="0" transform="translate(1317.68 148.00) scale(0.9326 1)" font-size="18.89" fill="#242424">Insert</text>
<text id="t_cdel" x="0" y="0" transform="translate(1317.66 186.90) scale(0.9462 1)" font-size="18.47" fill="#242424">Delete</text>
<text id="t_cfmt" x="0" y="0" transform="translate(1317.67 226.10) scale(0.9458 1)" font-size="18.89" fill="#242424">Format</text>
<text id="t_cells" x="0" y="0" transform="translate(1331.84 257.70) scale(0.9294 1)" font-size="15.89" fill="#242424">Cells</text>
<text id="t_sort" x="0" y="0" transform="translate(1519.16 197.10) scale(1.0400 1)" font-size="18.33" fill="#242424">Sort &amp;</text>
<text id="t_filter" x="0" y="0" transform="translate(1519.26 221.30) scale(0.9300 1)" font-size="18.33" fill="#242424">Filter</text>
<text id="t_find" x="0" y="0" transform="translate(1588.54 197.10) scale(1.0353 1)" font-size="18.33" fill="#242424">Find &amp;</text>
<text id="t_select" x="0" y="0" transform="translate(1585.25 221.30) scale(0.8824 1)" font-size="18.33" fill="#242424">Select</text>
<text id="t_editing" x="0" y="0" transform="translate(1519.79 257.70) scale(1.0064 1)" font-size="16.03" fill="#242424">Editing</text>
<text id="t_addins" x="0" y="0" transform="translate(1679.99 197.10) scale(1.0148 1)" font-size="18.33" fill="#242424">Add-ins</text>
<text id="t_addinsl" x="0" y="0" transform="translate(1683.20 257.70) scale(0.9778 1)" font-size="16.03" fill="#242424">Add-ins</text>
<text id="t_create" x="0" y="0" transform="translate(1785.27 197.10) scale(0.9241 1)" font-size="18.33" fill="#242424">Create</text>
<text id="t_apdf" x="0" y="0" transform="translate(1786.90 221.30) scale(0.9100 1)" font-size="18.33" fill="#242424">a PDF</text>
<text id="t_adobe" x="0" y="0" transform="translate(1763.39 257.70) scale(0.9632 1)" font-size="16.03" fill="#242424">Adobe Acro...</text>
<text id="t_sheet1" x="0" y="0" transform="translate(178.24 954.90) scale(0.9104 1)" font-size="21.29" fill="#1b1b1b" stroke="#1b1b1b" stroke-width="0.6">Sheet1</text>
<text id="t_ready" x="0" y="0" transform="translate(17.03 997.70) scale(0.9698 1)" font-size="15.03" fill="#3b3b3b">Ready</text>
<text id="t_acc" x="0" y="0" transform="translate(115.00 998.30) scale(0.9785 1)" font-size="15.75" fill="#3b3b3b">Accessibility: Good to go</text>
<text id="t_100" x="0" y="0" transform="translate(1868.00 998.30) scale(1.0000 1)" font-size="15.75" fill="#3b3b3b">100%</text>
<text x="19.6" y="282.50" text-anchor="middle" font-size="19.6" fill="#1f1f1f">3</text>
<text x="19.6" y="311.50" text-anchor="middle" font-size="19.6" fill="#1f1f1f">4</text>
<text x="19.6" y="340.50" text-anchor="middle" font-size="19.6" fill="#1f1f1f">5</text>
<text x="19.6" y="369.50" text-anchor="middle" font-size="19.6" fill="#1f1f1f">6</text>
<text x="19.6" y="398.50" text-anchor="middle" font-size="19.6" fill="#1f1f1f">7</text>
<text x="19.6" y="427.50" text-anchor="middle" font-size="19.6" fill="#1f1f1f">8</text>
<text x="19.6" y="456.50" text-anchor="middle" font-size="19.6" fill="#1f1f1f">9</text>
<text x="19.6" y="485.50" text-anchor="middle" font-size="19.6" fill="#1f1f1f">10</text>
<text x="19.6" y="514.50" text-anchor="middle" font-size="19.6" fill="#1f1f1f">11</text>
<text x="19.6" y="543.50" text-anchor="middle" font-size="19.6" fill="#1f1f1f">12</text>
<text x="19.6" y="572.50" text-anchor="middle" font-size="19.6" fill="#1f1f1f">13</text>
<text x="19.6" y="601.50" text-anchor="middle" font-size="19.6" fill="#1f1f1f">14</text>
<text x="19.6" y="630.50" text-anchor="middle" font-size="19.6" fill="#1f1f1f">15</text>
<text x="19.6" y="659.50" text-anchor="middle" font-size="19.6" fill="#1f1f1f">16</text>
<text x="19.6" y="688.50" text-anchor="middle" font-size="19.6" fill="#1f1f1f">17</text>
<text x="19.6" y="717.50" text-anchor="middle" font-size="19.6" fill="#1f1f1f">18</text>
<text x="19.6" y="746.50" text-anchor="middle" font-size="19.6" fill="#1f1f1f">19</text>
<text x="19.6" y="775.50" text-anchor="middle" font-size="19.6" fill="#1f1f1f">20</text>
<text x="19.6" y="804.50" text-anchor="middle" font-size="19.6" fill="#1f1f1f">21</text>
<text x="19.6" y="833.50" text-anchor="middle" font-size="19.6" fill="#1f1f1f">22</text>
<text x="19.6" y="862.50" text-anchor="middle" font-size="19.6" fill="#1f1f1f">23</text>
<text x="19.6" y="891.50" text-anchor="middle" font-size="19.6" fill="#1f1f1f">24</text>
<text x="19.6" y="920.50" text-anchor="middle" font-size="19.6" fill="#1f1f1f">25</text>
</svg>
</body></html>
